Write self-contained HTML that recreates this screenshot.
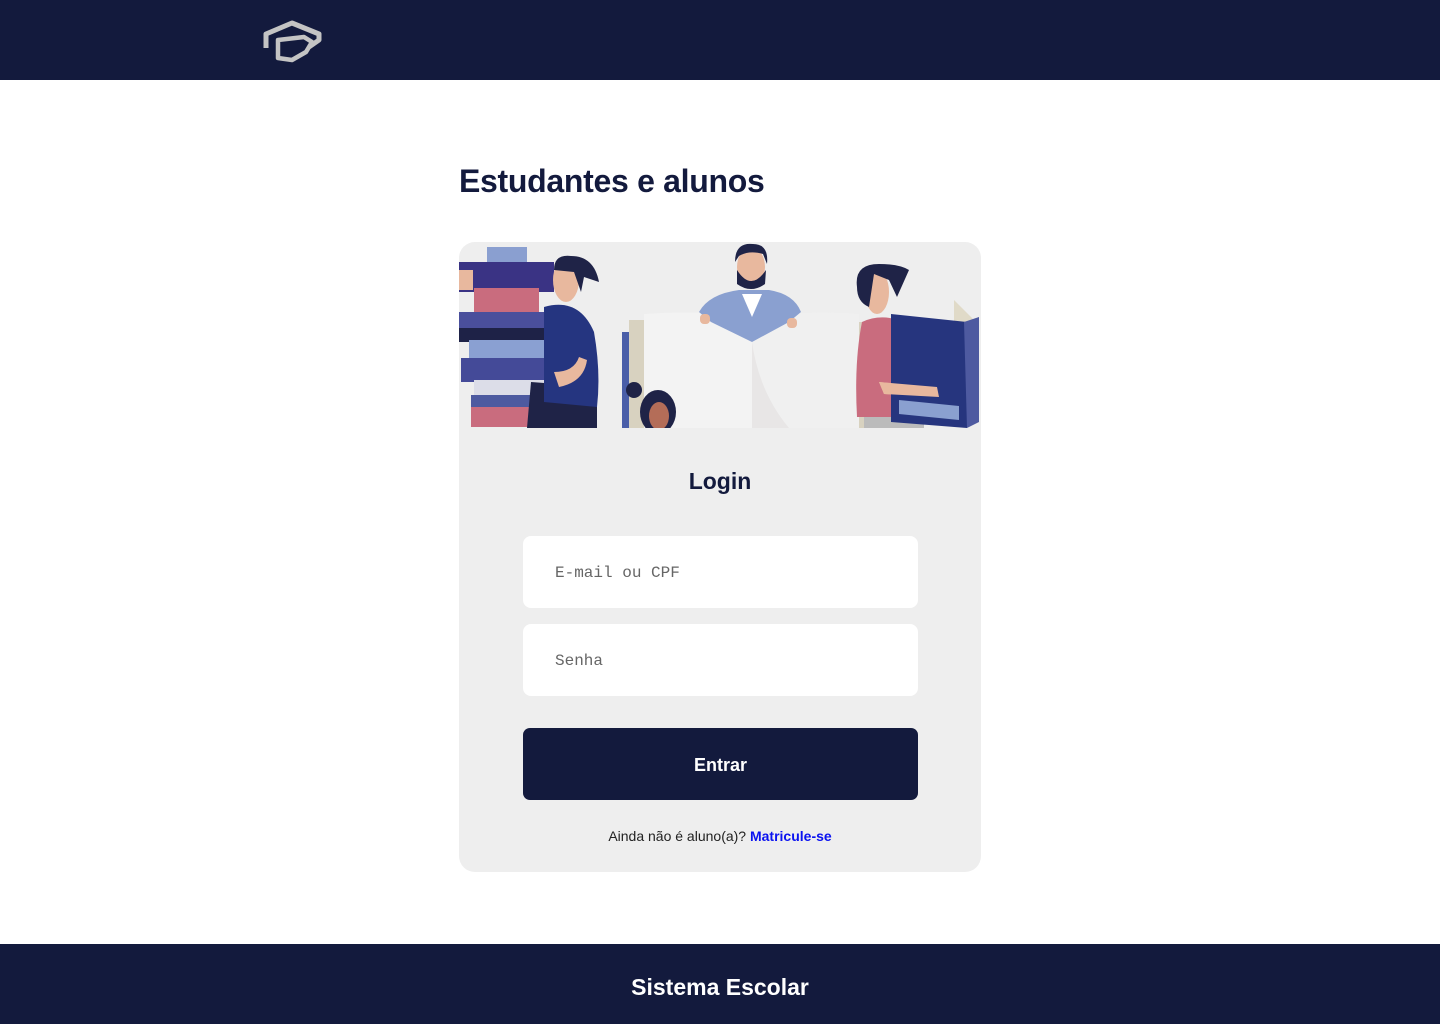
<!DOCTYPE html>
<html><head><meta charset="utf-8"><style>
*{margin:0;padding:0;box-sizing:border-box}
body{width:1440px;height:1024px;background:#fff;font-family:"Liberation Sans",sans-serif;position:relative;overflow:hidden}
.hdr{position:absolute;top:0;left:0;width:1440px;height:80px;background:#131a3d}
.ftr{position:absolute;top:944px;left:0;width:1440px;height:80px;background:#131a3d;color:#fff;font-weight:bold;font-size:23px;text-align:center;line-height:86px}
h1{position:absolute;left:459px;top:163px;font-size:32px;color:#131a3d;font-weight:bold;letter-spacing:-0.3px}
.card{position:absolute;left:459px;top:242px;width:522px;height:630px;background:#eeeeee;border-radius:16px;overflow:hidden}
.login{position:absolute;top:226px;width:100%;text-align:center;font-size:23px;font-weight:bold;color:#131a3d}
.inp{position:absolute;left:64px;width:395px;height:72px;background:#fff;border-radius:8px;font-family:"Liberation Mono",monospace;font-size:16px;color:#666;padding-left:32px;line-height:74px}
.btn{position:absolute;left:64px;top:486px;width:395px;height:72px;background:#131a3d;border-radius:7px;color:#fff;font-weight:bold;font-size:18px;text-align:center;line-height:74px}
.foot{position:absolute;top:586px;width:100%;text-align:center;font-size:14px;color:#222}
.foot b{color:#0a12f0}
</style></head><body>
<div class="hdr">
<svg style="position:absolute;left:262px;top:20px" width="60" height="44" viewBox="0 0 60 44">
<path d="M4 28 V14 L30 3 L57 14 L57 20 L47 27" fill="none" stroke="#c4c4c4" stroke-width="5" stroke-linejoin="round"/>
<path d="M16 20 L42 17 L50 22 L44 32 L30 40 L16 38 Z" fill="none" stroke="#c4c4c4" stroke-width="4.5" stroke-linejoin="round"/>
</svg>
</div>
<h1>Estudantes e alunos</h1>
<div class="card">
<svg width="522" height="186" viewBox="0 0 522 186" style="position:absolute;top:0;left:0">
<!-- center book -->
<rect x="163" y="90" width="12" height="96" fill="#4a5ea8"/>
<rect x="170" y="78" width="18" height="108" fill="#d8d2c0"/>
<rect x="400" y="80" width="10" height="106" fill="#d8d2c0"/>
<path d="M185 72 Q240 68 293 75 L293 186 L185 186 Z" fill="#f3f3f3"/>
<path d="M293 75 Q350 68 400 72 L400 186 L293 186 Z" fill="#f0f0f0"/>
<path d="M293 100 Q300 150 330 186 L293 186Z" fill="#e8e6e6"/>
<!-- man -->
<path d="M240 70 Q250 52 280 48 L310 48 Q335 52 342 70 L330 80 L293 100 L252 80Z" fill="#8aa0d0"/>
<path d="M283 52 L303 52 L293 75Z" fill="#fff"/>
<rect x="241" y="72" width="10" height="10" rx="4" fill="#e8b89e"/>
<rect x="328" y="76" width="10" height="10" rx="4" fill="#e8b89e"/>
<ellipse cx="292" cy="25" rx="14" ry="20" fill="#e8b89e"/>
<path d="M276 20 Q276 0 294 2 Q310 2 308 22 L304 12 Q290 8 280 14Z" fill="#1f2347"/>
<path d="M278 28 Q292 50 307 28 L306 42 Q292 52 278 42Z" fill="#1f2347"/>
<!-- left stack -->
<rect x="28" y="5" width="40" height="17" fill="#8a9fd0"/>
<rect x="0" y="20" width="95" height="30" fill="#3a3384"/>
<rect x="0" y="28" width="14" height="20" fill="#e8b89e"/>
<rect x="15" y="46" width="65" height="28" fill="#c96c7e"/>
<rect x="0" y="70" width="95" height="18" fill="#4a4f9c"/>
<rect x="0" y="86" width="90" height="14" fill="#1e2247"/>
<rect x="10" y="98" width="78" height="22" fill="#8aa0d2"/>
<rect x="2" y="116" width="95" height="24" fill="#444a98"/>
<rect x="15" y="138" width="77" height="17" fill="#dcdde8"/>
<rect x="12" y="153" width="86" height="14" fill="#4d5aa0"/>
<rect x="12" y="165" width="86" height="20" fill="#c96c7e"/>
<!-- person1 -->
<path d="M68 186 L72 140 L138 145 L138 186Z" fill="#1f2347"/>
<path d="M85 65 Q120 55 135 90 Q142 130 138 165 L85 160Z" fill="#253580"/>
<path d="M95 130 Q115 130 120 115 L128 118 Q125 140 100 145Z" fill="#e8b89e"/>
<ellipse cx="107" cy="38" rx="13" ry="22" fill="#e8b89e"/>
<path d="M95 28 Q95 12 112 14 Q135 14 140 40 L125 35 L122 50 L115 30 Z" fill="#1f2347"/>
<!-- girl -->
<ellipse cx="199" cy="170" rx="18" ry="22" fill="#1f2347"/>
<ellipse cx="200" cy="174" rx="10" ry="14" fill="#b46d58"/>
<circle cx="175" cy="148" r="8" fill="#1f2347"/>
<!-- woman -->
<rect x="405" y="172" width="60" height="14" fill="#bbb"/>
<path d="M403 80 Q420 72 440 78 L440 175 L398 175 Q395 120 403 80Z" fill="#c96c7e"/>
<ellipse cx="418" cy="50" rx="12" ry="22" fill="#e8b89e"/>
<path d="M398 45 Q395 22 420 22 Q440 22 450 28 L438 55 L430 38 L415 32 L410 65 Q398 60 398 45Z" fill="#1f2347"/>
<path d="M420 140 L478 145 L480 155 L425 152Z" fill="#e8b89e"/>
<!-- right book -->
<path d="M495 58 L515 78 L505 186 L495 180Z" fill="#e0dac8"/>
<path d="M432 72 L508 80 L508 186 L432 180Z" fill="#26357e"/>
<path d="M440 158 L500 164 L500 178 L440 172Z" fill="#8aa0d0"/>
<path d="M505 80 L520 75 L520 180 L508 186Z" fill="#4e5aa0"/>
<path d="M420 140 L478 145 L480 155 L425 152Z" fill="#e8b89e"/>
</svg>
<div class="login">Login</div>
<div class="inp" style="top:294px">E-mail ou CPF</div>
<div class="inp" style="top:382px">Senha</div>
<div class="btn">Entrar</div>
<div class="foot">Ainda não é aluno(a)? <b>Matricule-se</b></div>
</div>
<div class="ftr">Sistema Escolar</div>
</body></html>
